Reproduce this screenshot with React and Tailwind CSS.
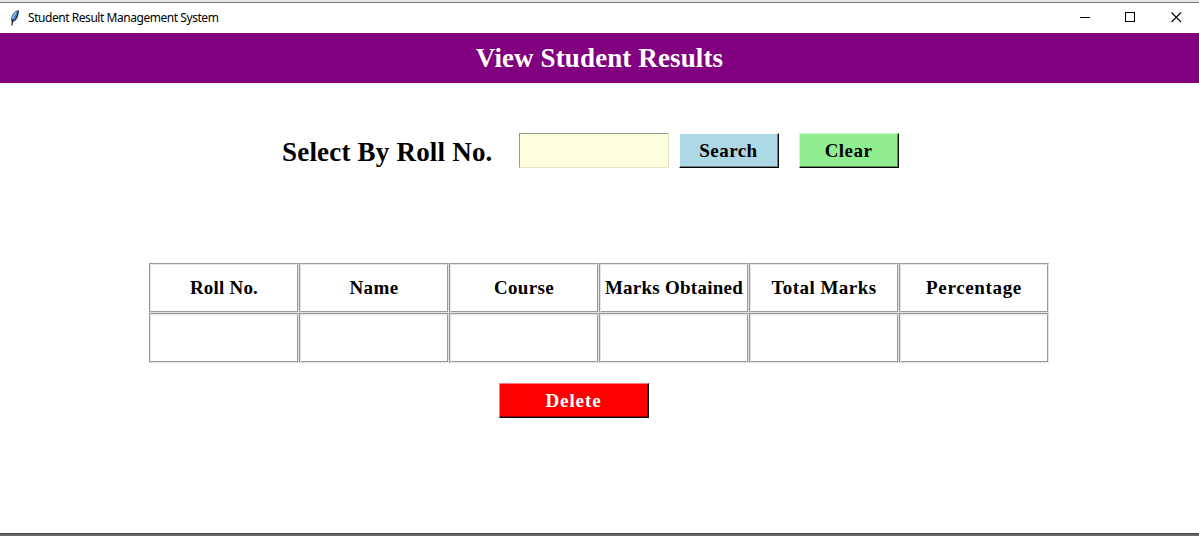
const headers = [
  { label: 'Roll No.', cls: 'tracking-[0.2px]' },
  { label: 'Name', cls: 'tracking-[0.35px]' },
  { label: 'Course', cls: 'tracking-[0.35px]' },
  { label: 'Marks Obtained', cls: 'tracking-[0.25px]' },
  { label: 'Total Marks', cls: 'tracking-[0.45px]' },
  { label: 'Percentage', cls: 'tracking-[0.65px]' },
];

function Feather() {
  return (
    <svg width="16" height="18" viewBox="0 0 16 18" className="shrink-0">
      <path d="M11.500 1.500C8 2 4.500 6 4.300 11l0.900 2L8.300 11.500C10.500 8.500 11.700 5 11.500 1.500Z" fill="#4a86d0" stroke="#26323f" strokeWidth="0.700" />
      <path d="M9.300 3.300C7 5.300 6 7.500 5.500 10" fill="none" stroke="#9cc4f0" strokeWidth="1.300" />
      <path d="M10.800 2.500C10.800 5.500 9.600 8.500 8 11" fill="none" stroke="#182028" strokeWidth="0.900" />
      <path d="M6.300 10C5.500 12 5 14 4.800 16.500" fill="none" stroke="#111" strokeWidth="1.100" />
    </svg>
  );
}

function TitleBar() {
  return (
    <header className="flex h-[30px] shrink-0 items-center bg-white">
      <div className="flex flex-1 items-center pl-[7px]">
        <Feather />
        <span className="ml-[5px] font-['Noto_Sans',sans-serif] text-[12px] leading-[16px] tracking-[-0.45px] whitespace-nowrap text-black">
          Student Result Management System
        </span>
      </div>
      <svg width="139" height="30" viewBox="0 0 139 30" fill="none" stroke="#000" shapeRendering="crispEdges">
        <path d="M20 14.500h10M65.500 9.500h9v9h-9z" />
        <path d="M111.500 9.500l9.500 9.500M121 9.500l-9.500 9.500" shapeRendering="auto" strokeWidth="1.100" />
      </svg>
    </header>
  );
}

function Button({ className, inner, children }) {
  return (
    <button className={`box-border flex h-[35px] shrink-0 border border-r-black border-b-black ${className}`}>
      <span className={`flex h-full w-full items-center justify-center border-r border-b pt-[2px] text-[19px] leading-[22px] font-bold ${inner}`}>
        {children}
      </span>
    </button>
  );
}

function Cell({ children, cls = '' }) {
  return (
    <div className="h-[50px] w-[150px] border border-t-[#999999] border-r-[#e3e3e3] border-b-[#e3e3e3] border-l-[#999999]">
      <div className={`flex h-full w-full items-center justify-center border border-t-[#e3e3e3] border-r-[#999999] border-b-[#999999] border-l-[#e3e3e3] text-[19px] leading-[22px] font-bold whitespace-nowrap ${cls}`}>
        {children}
      </div>
    </div>
  );
}

export default function App() {
  return (
    <div className="flex h-[536px] w-[1199px] flex-col overflow-hidden bg-white font-['Liberation_Serif',serif] text-black">
      <div className="h-[3px] shrink-0 border-b border-[#777777] bg-[#e6e6e6]" />
      <TitleBar />
      <h1 className="flex h-[50px] shrink-0 items-center justify-center bg-[#800080] text-[27px] leading-[30px] font-bold tracking-[0.12px] text-white">
        View Student Results
      </h1>
      <main className="flex flex-1 flex-col">
        <div className="mt-[50px] flex h-[35px] shrink-0 pl-[282px]">
          <label className="w-[237px] pt-[4px] text-[27px] leading-[30px] font-bold tracking-[0.2px] whitespace-nowrap">
            Select By Roll No.
          </label>
          <input className="h-[35px] w-[150px] border border-t-[#999986] border-r-[#e6e6c9] border-b-[#e6e6c9] border-l-[#999986] bg-[#ffffe0] outline-none" />
          <Button className="ml-[10px] w-[100px] border-t-white border-l-white bg-[#add8e6]" inner="border-[#68828a] tracking-[0.45px]">
            Search
          </Button>
          <Button className="ml-[20px] w-[100px] border-t-[#c8ffc8] border-l-[#c8ffc8] bg-[#90ee90]" inner="border-[#568f56] tracking-[0.45px]">
            Clear
          </Button>
        </div>
        <div className="mt-[95px] ml-[149px] grid w-[900px] grid-cols-6">
          {headers.map((h) => (
            <Cell key={h.label} cls={h.cls}>{h.label}</Cell>
          ))}
          {headers.map((h) => (
            <Cell key={h.label} />
          ))}
        </div>
        <div className="mt-[20px] ml-[499px] flex">
          <Button className="w-[150px] border-t-[#ff7f7f] border-l-[#ff7f7f] bg-[#ff0000] text-white" inner="border-[#990000] tracking-[0.9px]">
            Delete
          </Button>
        </div>
      </main>
      <div className="h-[3px] shrink-0 border-t border-[#444444] bg-[#686666]" />
    </div>
  );
}
